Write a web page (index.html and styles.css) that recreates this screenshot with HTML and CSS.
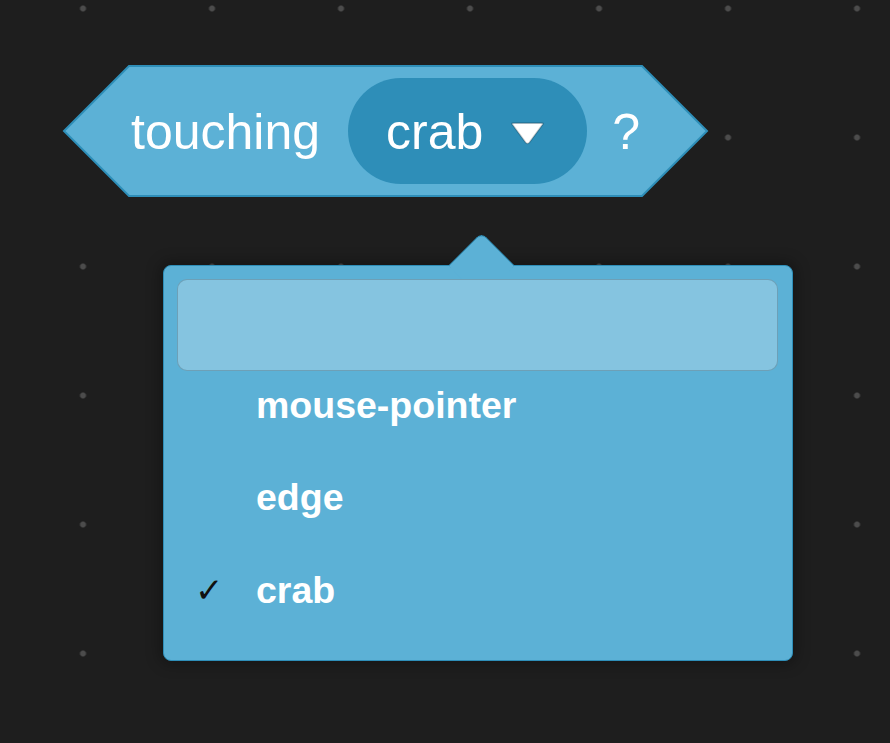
FILE: index.html
```html
<!DOCTYPE html>
<html lang="en">
<head>
<meta charset="utf-8">
<title>touching crab?</title>
<link rel="stylesheet" href="styles.css">
</head>
<body class="workspace">
  <div class="block">
    <svg class="block-shape" viewBox="0 0 643 130" preserveAspectRatio="none" aria-hidden="true">
      <polygon points="0,65 65,0 578,0 643,65 578,130 65,130" fill="#5cb1d6" stroke="#2e8eb8" stroke-width="2" stroke-linejoin="miter"/>
    </svg>
    <span class="block-label">touching</span>
    <div class="pill">
      <span class="pill-text">crab</span>
      <svg class="pill-arrow" viewBox="0 0 36 24" aria-hidden="true">
        <path d="M3.5 2.5 Q1.5 1 4.5 1 H31.5 Q34.5 1 32.5 2.5 L20 19.5 Q18 22 16 19.5 Z" fill="#ffffff" stroke="rgba(0,0,0,0.2)" stroke-width="1.6" stroke-linejoin="round"/>
      </svg>
    </div>
    <span class="block-label block-q">?</span>
  </div>

  <div class="menu">
    <div class="menu-arrow"></div>
    <div class="search"></div>
    <ul class="items">
      <li class="item"><span class="check"></span><span class="item-text">mouse-pointer</span></li>
      <li class="item"><span class="check"></span><span class="item-text">edge</span></li>
      <li class="item"><span class="check">✓</span><span class="item-text">crab</span></li>
    </ul>
  </div>
</body>
</html>
```

FILE: styles.css
```css
html, body {
  margin: 0;
  padding: 0;
}

.workspace {
  width: 890px;
  height: 743px;
  overflow: hidden;
  background-color: #1e1e1e;
  background-image: radial-gradient(circle, #4c4c4c 0, #4c4c4c 2.4px, rgba(76,76,76,0) 3.6px);
  background-size: 129px 129px;
  background-position: 18.5px -56px;
  padding: 66px 0 0 64px;
  box-sizing: border-box;
  display: flex;
  flex-direction: column;
  align-items: flex-start;
}

/* ---------- block ---------- */
.block {
  position: relative;
  width: 643px;
  height: 130px;
  box-sizing: border-box;
  padding-left: 67px;
  display: flex;
  align-items: center;
  font-family: "Liberation Sans", Arial, sans-serif;
  font-size: 50px;
  color: #ffffff;
}

.block-shape {
  position: absolute;
  left: 0;
  top: 0;
  width: 643px;
  height: 130px;
  overflow: visible;
}

.block-label {
  position: relative;
  line-height: 56px;
  margin-top: 2px;
}

.block-q {
  margin-left: 25px;
}

.pill {
  position: relative;
  margin-left: 28px;
  height: 106px;
  border-radius: 53px;
  background: #2e8eb8;
  box-sizing: border-box;
  padding: 0 41px 0 38px;
  display: flex;
  align-items: center;
  gap: 26px;
}

.pill-text {
  line-height: 56px;
  margin-top: 2px;
}

.pill-arrow {
  width: 37px;
  height: 25px;
  display: block;
  margin-top: 6px;
}

/* ---------- dropdown menu ---------- */
.menu {
  position: relative;
  margin-top: 69px;
  margin-left: 99px;
  width: 630px;
  height: 396px;
  box-sizing: border-box;
  background: #5cb1d6;
  border: 1px solid #2e8eb8;
  border-radius: 8px;
  box-shadow: 0 0 14px 4px rgba(0, 0, 0, 0.28);
  padding: 13px 14px 0 13px;
  font-family: "Liberation Sans", Arial, sans-serif;
}

.menu-arrow {
  position: absolute;
  left: 294px;
  top: -24px;
  width: 47px;
  height: 47px;
  box-sizing: border-box;
  background: #5cb1d6;
  border-top: 1px solid #2e8eb8;
  border-left: 1px solid #2e8eb8;
  border-top-left-radius: 7px;
  transform: rotate(45deg);
}

.search {
  position: relative;
  height: 92px;
  box-sizing: border-box;
  background: #85c4e0;
  border: 1px solid rgba(0, 0, 0, 0.18);
  border-radius: 10px;
}

.items {
  list-style: none;
  margin: 0;
  padding: 11px 0 0 0;
  display: flex;
  flex-direction: column;
  gap: 46.4px;
}

.item {
  display: flex;
  align-items: center;
  height: 46px;
  padding-left: 18px;
  font-size: 37.5px;
  font-weight: bold;
  line-height: 46px;
  color: #ffffff;
}

.check {
  width: 61px;
  flex: none;
  color: #111111;
  font-family: "DejaVu Sans", sans-serif;
  font-weight: bold;
  font-size: 34px;
}

.item-text {
  white-space: nowrap;
}
```
